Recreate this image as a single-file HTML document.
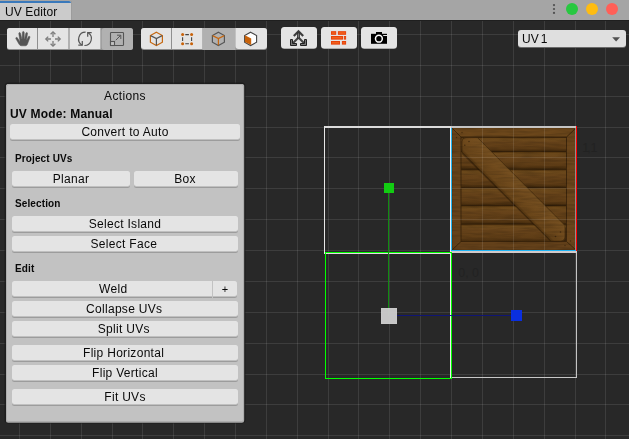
<!DOCTYPE html>
<html><head><meta charset="utf-8">
<style>
html,body{margin:0;padding:0;}
body{width:629px;height:439px;overflow:hidden;position:relative;background:#282828;font-family:"Liberation Sans",sans-serif;color:#090909;}
.abs{position:absolute;}
#hdr{left:0;top:0;width:629px;height:20px;background:#a5a5a5;}
#tab{left:0;top:1px;width:71px;height:19px;background:#cbcbcb;padding-top:2px;box-sizing:border-box;border-radius:0 2px 0 0;filter:grayscale(1);font-size:12px;line-height:17px;padding-left:5px;letter-spacing:0.1px;}
.btn{letter-spacing:0.3px;position:absolute;height:15px;background:#e4e4e4;border-radius:2.5px;font-size:12px;line-height:16px;text-align:center;box-shadow:0 1px 0 #c0c0c0,0 2px 0 #9c9c9c;white-space:nowrap;}
.lbl{letter-spacing:0.12px;position:absolute;font-weight:bold;font-size:10px;line-height:12px;left:9px;white-space:nowrap;}
</style></head><body>
<svg class="abs" style="left:0;top:0;" width="629" height="439" viewBox="0 0 629 439" shape-rendering="crispEdges">
<rect x="0" y="20" width="629" height="1" fill="#1f1f1f"/>
<defs>
<linearGradient id="plk" x1="0" y1="0" x2="0" y2="1">
<stop offset="0" stop-color="#54350f"/><stop offset="0.1" stop-color="#6f4b1c"/><stop offset="0.35" stop-color="#67431a"/><stop offset="0.78" stop-color="#5f3d16"/><stop offset="0.94" stop-color="#4c300f"/><stop offset="1" stop-color="#38230a"/>
</linearGradient>
<linearGradient id="brd" gradientUnits="userSpaceOnUse" x1="500" y1="190" x2="520" y2="170">
<stop offset="0" stop-color="#523410"/><stop offset="0.1" stop-color="#694519"/><stop offset="0.5" stop-color="#724c1e"/><stop offset="0.9" stop-color="#775222"/><stop offset="1" stop-color="#5e3c14"/>
</linearGradient>
<filter id="grain" x="0" y="0" width="100%" height="100%">
<feTurbulence type="fractalNoise" baseFrequency="0.05 0.45" numOctaves="2" seed="3" result="n"/>
<feColorMatrix in="n" type="matrix" values="0 0 0 0 0  0 0 0 0 0  0 0 0 0 0  0.9 0 0 0 -0.33" result="a"/>
<feComposite in="a" in2="SourceGraphic" operator="in"/>
</filter>
<clipPath id="inner"><rect x="461" y="137" width="105.5" height="104.5"/></clipPath>
</defs>
<g id="crate" shape-rendering="auto">
<rect x="452" y="128" width="124" height="122" fill="#35210a"/>
<!-- planks -->
<g clip-path="url(#inner)">
<rect x="461" y="137.5" width="106" height="13.7" fill="url(#plk)"/>
<rect x="461" y="152" width="106" height="17" fill="url(#plk)"/>
<rect x="461" y="169.8" width="106" height="17.4" fill="url(#plk)"/>
<rect x="461" y="188" width="106" height="17.2" fill="url(#plk)"/>
<rect x="461" y="206" width="106" height="17.8" fill="url(#plk)"/>
<rect x="461" y="224.6" width="106" height="17" fill="url(#plk)"/>
<!-- board shadow -->
<path d="M465 139 H478 L566 228 V240 a3 3 0 0 1 -3 3 H552 L462 154 V142 a3 3 0 0 1 3 -3 Z" fill="#1e1205" opacity="0.45"/>
<!-- board -->
<path d="M466 137.6 H477.5 L565 225.5 V237 a4 4 0 0 1 -4 4 H551 L462 152 V141.6 a4 4 0 0 1 4 -4 Z" fill="url(#brd)" stroke="#3f280c" stroke-width="0.7"/>
<g fill="#2a1a08" opacity="0.6"><circle cx="469" cy="141.5" r="0.8"/><circle cx="464.8" cy="145.2" r="0.8"/><circle cx="560.5" cy="232" r="0.8"/><circle cx="555.5" cy="236.5" r="0.8"/></g>
</g>
<!-- frame -->
<path d="M452 128 H576 L566.5 137 H461 Z" fill="#6c471b"/>
<path d="M452 250 H576 L566.5 241.5 H461 Z" fill="#64411a"/>
<path d="M452 128 L461 137 V241.5 L452 250 Z" fill="#66431a"/>
<path d="M576 128 L566.5 137 V241.5 L576 250 Z" fill="#69451b"/>
<path d="M452 128 L461 137 M576 128 L566.5 137 M452 250 L461 241.5 M576 250 L566.5 241.5" stroke="#40290c" stroke-width="0.9" fill="none"/>
<path d="M461 137 H566.5 V241.5 H461 Z" fill="none" stroke="#3a240b" stroke-width="0.9"/>
<rect x="452" y="128" width="124" height="122" fill="none" stroke="#50330f" stroke-width="1" opacity="0.6"/>
<g fill="#2a1a08" opacity="0.55"><circle cx="456.5" cy="137.5" r="0.7"/><circle cx="462" cy="132.5" r="0.7"/><circle cx="570.5" cy="241" r="0.7"/><circle cx="565" cy="245.5" r="0.7"/></g>
<!-- grain overlay -->
<rect x="452" y="128" width="124" height="122" fill="#2a1806" filter="url(#grain)" opacity="0.35"/>
</g>

<g fill="rgba(255,255,255,0.1)"><rect x="19" y="21" width="1" height="418"/><rect x="50" y="21" width="1" height="418"/><rect x="81" y="21" width="1" height="418"/><rect x="112" y="21" width="1" height="418"/><rect x="142" y="21" width="1" height="418"/><rect x="173" y="21" width="1" height="418"/><rect x="204" y="21" width="1" height="418"/><rect x="235" y="21" width="1" height="418"/><rect x="266" y="21" width="1" height="418"/><rect x="297" y="21" width="1" height="418"/><rect x="328" y="21" width="1" height="418"/><rect x="358" y="21" width="1" height="418"/><rect x="389" y="21" width="1" height="418"/><rect x="420" y="21" width="1" height="418"/><rect x="451" y="21" width="1" height="418"/><rect x="482" y="21" width="1" height="418"/><rect x="513" y="21" width="1" height="418"/><rect x="544" y="21" width="1" height="418"/><rect x="575" y="21" width="1" height="418"/><rect x="605" y="21" width="1" height="418"/><rect x="0" y="34" width="629" height="1"/><rect x="0" y="65" width="629" height="1"/><rect x="0" y="96" width="629" height="1"/><rect x="0" y="127" width="629" height="1"/><rect x="0" y="157" width="629" height="1"/><rect x="0" y="188" width="629" height="1"/><rect x="0" y="219" width="629" height="1"/><rect x="0" y="250" width="629" height="1"/><rect x="0" y="281" width="629" height="1"/><rect x="0" y="312" width="629" height="1"/><rect x="0" y="343" width="629" height="1"/><rect x="0" y="374" width="629" height="1"/><rect x="0" y="404" width="629" height="1"/><rect x="0" y="435" width="629" height="1"/></g>
<!-- uv outlines -->
<g>
<rect x="324" y="126" width="127" height="2" fill="#dcdcdc"/>
<rect x="451" y="126" width="126" height="2" fill="#c4c4c4"/>
<rect x="324" y="126" width="1" height="128" fill="#e6e6e6"/>
<rect x="450" y="127" width="1" height="251" fill="#ececec"/>
<rect x="576" y="252" width="1" height="126" fill="#c4c4c4"/>
<rect x="452" y="377" width="125" height="1" fill="#c8c8c8"/>
<rect x="575" y="128" width="1" height="123" fill="#8e8e8e"/>
<rect x="576" y="126" width="1" height="126" fill="#ff0000"/>
<rect x="451" y="128" width="1" height="124" fill="#1fb4f4"/>
<rect x="451" y="250" width="125" height="1" fill="#1fb4f4"/>
<rect x="451" y="251" width="126" height="2" fill="#d2caca"/>
<rect x="325" y="253" width="126" height="1" fill="#e8d8e8"/>
<rect x="325" y="252" width="127" height="1" fill="#00ff00"/>
<rect x="325" y="252" width="1" height="127" fill="#00ff00"/>
<rect x="451" y="252" width="1" height="127" fill="#00ff00"/>
<rect x="325" y="378" width="127" height="1" fill="#00ff00"/>
</g>
<text x="458.3" y="277" font-family="Liberation Sans, sans-serif" font-size="12.4" fill="#222222">0, 0</text>
<text x="582.2" y="151.7" font-family="Liberation Sans, sans-serif" font-size="12.4" fill="#222222" textLength="15.2" lengthAdjust="spacing">1, 1</text>
<!-- gizmo -->
<rect x="388" y="193" width="1" height="123" fill="#118c11"/>
<rect x="389" y="315" width="122" height="1" fill="#0b127e" opacity="0.88"/>
<rect x="384" y="183" width="10" height="10" fill="#12cc12"/>
<rect x="511" y="310" width="11" height="11" fill="#0a2fe0"/>
<rect x="381" y="308" width="16" height="16" fill="rgba(214,214,214,0.93)"/><rect x="382" y="309" width="14" height="14" fill="rgba(196,196,196,0.5)"/>
</svg>

<div class="abs" id="hdr"></div>
<div class="abs" style="left:71px;top:1px;width:1px;height:19px;background:#9c9c9c;"></div>
<div class="abs" id="tab"><span style="position:relative;top:1px;">UV Editor</span></div>
<div class="abs" style="left:0;top:1px;width:71px;height:2px;background:#3a79bb;border-radius:0 2px 0 0;"></div>

<svg class="abs" style="left:0;top:0;" width="629" height="60" viewBox="0 0 629 60">
<!-- window controls -->
<circle cx="572" cy="9" r="6" fill="#28c840"/>
<circle cx="592" cy="9" r="6" fill="#febc12"/>
<circle cx="612" cy="9" r="6" fill="#ff5f57"/>
<g fill="#4e4e4e"><circle cx="554" cy="5.1" r="1.1"/><circle cx="554" cy="9" r="1.1"/><circle cx="554" cy="12.9" r="1.1"/></g>

<!-- group 1 -->
<rect x="7" y="28" width="126" height="22" rx="2.5" fill="#8f8f8f"/>
<path d="M9.5 28 H37 V49 H9 a2 2 0 0 1 -2 -2 V30.5 a2.5 2.5 0 0 1 2.5 -2.5 Z" fill="#e4e4e4"/>
<rect x="38" y="28" width="30.4" height="21" fill="#e4e4e4"/>
<rect x="69.6" y="28" width="30.8" height="21" fill="#e4e4e4"/>
<rect x="101.5" y="28" width="31.5" height="22" rx="3" fill="#b1b1b1"/>
<!-- hand -->
<g fill="#555" stroke="#555" stroke-width="0.5" stroke-linejoin="round">
<path d="M17.2 37.6 c-.9-.6 -1.9 .2 -1.3 1.2 l3 5.2 c.8 1.3 1.6 1.8 3 1.8 h3.2 c1.3 0 2 -.6 2.4 -1.8 l2.4 -6.6 c.4 -1.1 -1 -1.7 -1.5 -.7 l-1.6 3.2 l-.2 -.1 l.9 -6.2 c.2 -1.2 -1.4 -1.5 -1.7 -.3 l-1.2 5.6 h-.3 l-.1 -6.6 c0 -1.2 -1.7 -1.2 -1.8 0 l-.3 6.6 h-.3 l-1.3 -5.6 c-.3 -1.1 -1.9 -.8 -1.7 .4 l1.3 8.2 z"/>
</g>
<!-- move -->
<g stroke="#7c7c7c" stroke-width="1.3" fill="none" stroke-linecap="butt">
<path d="M53 32.5 V37 M53 41 V45.5 M46.5 39 H51 M55 39 H59.5"/>
<path d="M50.6 34.2 L53 31.8 L55.4 34.2 M50.6 43.8 L53 46.2 L55.4 43.8 M48.2 36.6 L45.8 39 L48.2 41.4 M57.8 36.6 L60.2 39 L57.8 41.4"/>
</g>
<!-- rotate -->
<g stroke="#555" stroke-width="1.2" fill="none">
<path d="M85.6 32.2 A6.9 6.9 0 0 0 81.8 44.9"/>
<path d="M78.3 45.1 H82.3 V41.1"/>
<path d="M84.4 45.5 A6.9 6.9 0 0 0 88.2 32.8"/>
<path d="M91.7 32.7 H87.7 V36.7"/>
</g>
<!-- scale -->
<g stroke="#555" stroke-width="1.1" fill="none">
<rect x="110.5" y="32.5" width="13" height="13" rx="0.8"/>
<rect x="110.5" y="41.5" width="4" height="4" fill="#c2c2c2"/>
<path d="M115.8 40.2 L120.6 35.4 M117 35.2 H120.8 V39" stroke-width="1"/>
</g>

<!-- group 2 -->
<rect x="141" y="28" width="126" height="22" rx="3" fill="#8f8f8f"/>
<path d="M144 28 H171 V49 H144 a3 3 0 0 1 -3 -3 V31 a3 3 0 0 1 3 -3 Z" fill="#e4e4e4"/>
<rect x="172" y="28" width="30.5" height="21" fill="#e4e4e4"/>
<rect x="202.5" y="28" width="33" height="22" fill="#b1b1b1"/>
<path d="M235.5 28 H264 a3 3 0 0 1 3 3 V46 a3 3 0 0 1 -3 3 H238.5 a3 3 0 0 1 -3 -3 Z" fill="#e4e4e4"/>
<!-- vertex icon -->
<g fill="none" stroke-width="1.2">
<path d="M156.4 32.2 L162.4 35.5 V42.2 L156.4 45.5 L150.4 42.2 V35.5 Z" stroke="#c6670f"/>
<path d="M150.6 35.6 L156.4 38.6 L162.2 35.6 M156.4 38.6 V45.2" stroke="#555"/>
</g>
<!-- edge-select icon (dashed square) -->
<g stroke="#444" stroke-width="1.1" fill="none">
<path d="M185.3 34.6 H188.9 M185.3 43.7 H188.9 M182.6 37.2 V40.9 M191.6 37.2 V40.9"/>
</g>
<g fill="#c8620a"><circle cx="182.6" cy="34.6" r="1.5"/><circle cx="191.6" cy="34.6" r="1.5"/><circle cx="182.6" cy="43.7" r="1.5"/><circle cx="191.6" cy="43.7" r="1.5"/></g>
<!-- edge icon -->
<g fill="none" stroke-width="1.2">
<path d="M218.4 32.2 L224.4 35.5 V42.2 L218.4 45.5 L212.4 42.2 V35.5 Z" stroke="#555"/>
<path d="M212.6 35.6 L218.4 38.6 L224.2 35.6 M218.4 38.6 V45.2" stroke="#c6670f"/>
</g>
<!-- face icon -->
<path d="M250.6 32.2 L256.6 35.5 V42.2 L250.6 45.5 L244.6 42.2 V35.5 Z" fill="#fff" stroke="#444" stroke-width="1.1"/>
<path d="M244.9 35.3 L251.2 38.4 V45 L244.9 41.9 Z" fill="#c8620a"/>

<!-- single buttons -->
<rect x="281" y="27.1" width="36" height="22" rx="3.5" fill="#777"/><rect x="281" y="27.1" width="36" height="21.4" rx="3.5" fill="#e4e4e4"/>
<rect x="321" y="27.1" width="36" height="22" rx="3.5" fill="#777"/><rect x="321" y="27.1" width="36" height="21.4" rx="3.5" fill="#e4e4e4"/>
<rect x="361" y="27.1" width="36" height="22" rx="3.5" fill="#777"/><rect x="361" y="27.1" width="36" height="21.4" rx="3.5" fill="#e4e4e4"/>
<!-- triple arrow -->
<g>
<path d="M298.5 37.6 L292.6 43.5 M298.5 37.6 L304.4 43.5" stroke="#454545" stroke-width="2.1" fill="none"/>
<path d="M294.6 35.2 L298.5 31.3 L302.4 35.2" stroke="#3c3c3c" stroke-width="2.2" fill="none" stroke-linecap="square"/>
<rect x="297.5" y="33" width="2" height="5" fill="#777" stroke="#2a2a2a" stroke-width="0.8"/>
<path d="M290.5 39.5 h2 v4 h4 v2 h-6 z" fill="#777" stroke="#222" stroke-width="1"/>
<path d="M306.5 39.5 h-2 v4 h-4 v2 h6 z" fill="#777" stroke="#222" stroke-width="1"/>
</g>
<!-- bricks -->
<g fill="#f0601c" stroke="#e8420a" stroke-width="1">
<rect x="331.5" y="31.7" width="4.2" height="2.6"/>
<rect x="338.4" y="31.7" width="7.2" height="2.6"/>
<rect x="331.5" y="36.5" width="11" height="2.6"/>
<rect x="344.3" y="36.5" width="1.3" height="2.6"/>
<rect x="331.5" y="41.5" width="8" height="2.6"/>
<rect x="342.4" y="41.5" width="3.2" height="2.6"/>
</g>
<!-- camera -->
<g>
<rect x="371" y="33.8" width="16" height="10" fill="#000"/>
<rect x="376" y="32" width="6" height="2.2" fill="#000"/>
<circle cx="378.9" cy="38.7" r="3.4" fill="none" stroke="#fff" stroke-width="1.5"/>
<rect x="383.2" y="35" width="3.8" height="0.9" fill="#fff"/>
</g>

</svg>

<div class="abs" style="left:518px;top:30px;width:108px;height:17px;background:#dfdfdf;border-radius:3px;font-size:12px;line-height:19px;padding-left:4px;box-sizing:border-box;box-shadow:0 1px 0 #6a6a6a;word-spacing:-1.2px;overflow:hidden;filter:grayscale(1);">UV 1</div>
<svg class="abs" style="left:610px;top:35px;" width="12" height="8" viewBox="0 0 12 8"><path d="M2.2 2.2 L10 2.2 L6.1 6.6 Z" fill="#505050"/></svg>

<!-- panel -->
<div class="abs" id="panel" style="left:6px;top:84px;width:238px;height:338px;background:#c2c2c2;border-radius:2.5px;filter:grayscale(1);box-shadow:inset 0 0 0 1px #adadad, 0 1px 0 0 #888, 0.5px 0 0 0 #555, 0 0 0 1.5px rgba(26,26,26,0.75);">
  <div class="abs" style="left:0;top:4px;width:238px;text-align:center;font-size:12px;line-height:16px;letter-spacing:0.35px;">Actions</div>
  <div class="abs" style="left:4px;top:22px;font-size:12px;font-weight:bold;line-height:16px;white-space:nowrap;letter-spacing:0.18px;">UV Mode: Manual</div>
  <div class="btn" style="left:4px;top:40px;width:230px;">Convert to Auto</div>
  <div class="lbl" style="top:69px;">Project UVs</div>
  <div class="btn" style="left:6px;top:87px;width:118px;">Planar</div>
  <div class="btn" style="left:128px;top:87px;width:104px;text-indent:-1.8px;">Box</div>
  <div class="lbl" style="top:114px;">Selection</div>
  <div class="btn" style="left:6px;top:132px;width:226px;">Select Island</div>
  <div class="btn" style="left:6px;top:152px;width:226px;text-indent:-2.2px;">Select Face</div>
  <div class="lbl" style="top:179px;">Edit</div>
  <div class="btn" style="left:6px;top:197px;width:200px;border-radius:2.5px 0 0 2.5px;text-indent:2.4px;">Weld</div>
  <div class="btn" style="left:207px;top:197px;width:24px;border-radius:0 2.5px 2.5px 0;"><span style="position:relative;top:0px;font-size:11px;">+</span></div>
  <div class="btn" style="left:6px;top:217px;width:226px;text-indent:-1.6px;">Collapse UVs</div>
  <div class="btn" style="left:6px;top:237px;width:226px;text-indent:-2.4px;">Split UVs</div>
  <div class="btn" style="left:6px;top:261px;width:226px;text-indent:-2.8px;">Flip Horizontal</div>
  <div class="btn" style="left:6px;top:281px;width:226px;">Flip Vertical</div>
  <div class="btn" style="left:6px;top:305px;width:226px;">Fit UVs</div>
</div>
</body></html>
